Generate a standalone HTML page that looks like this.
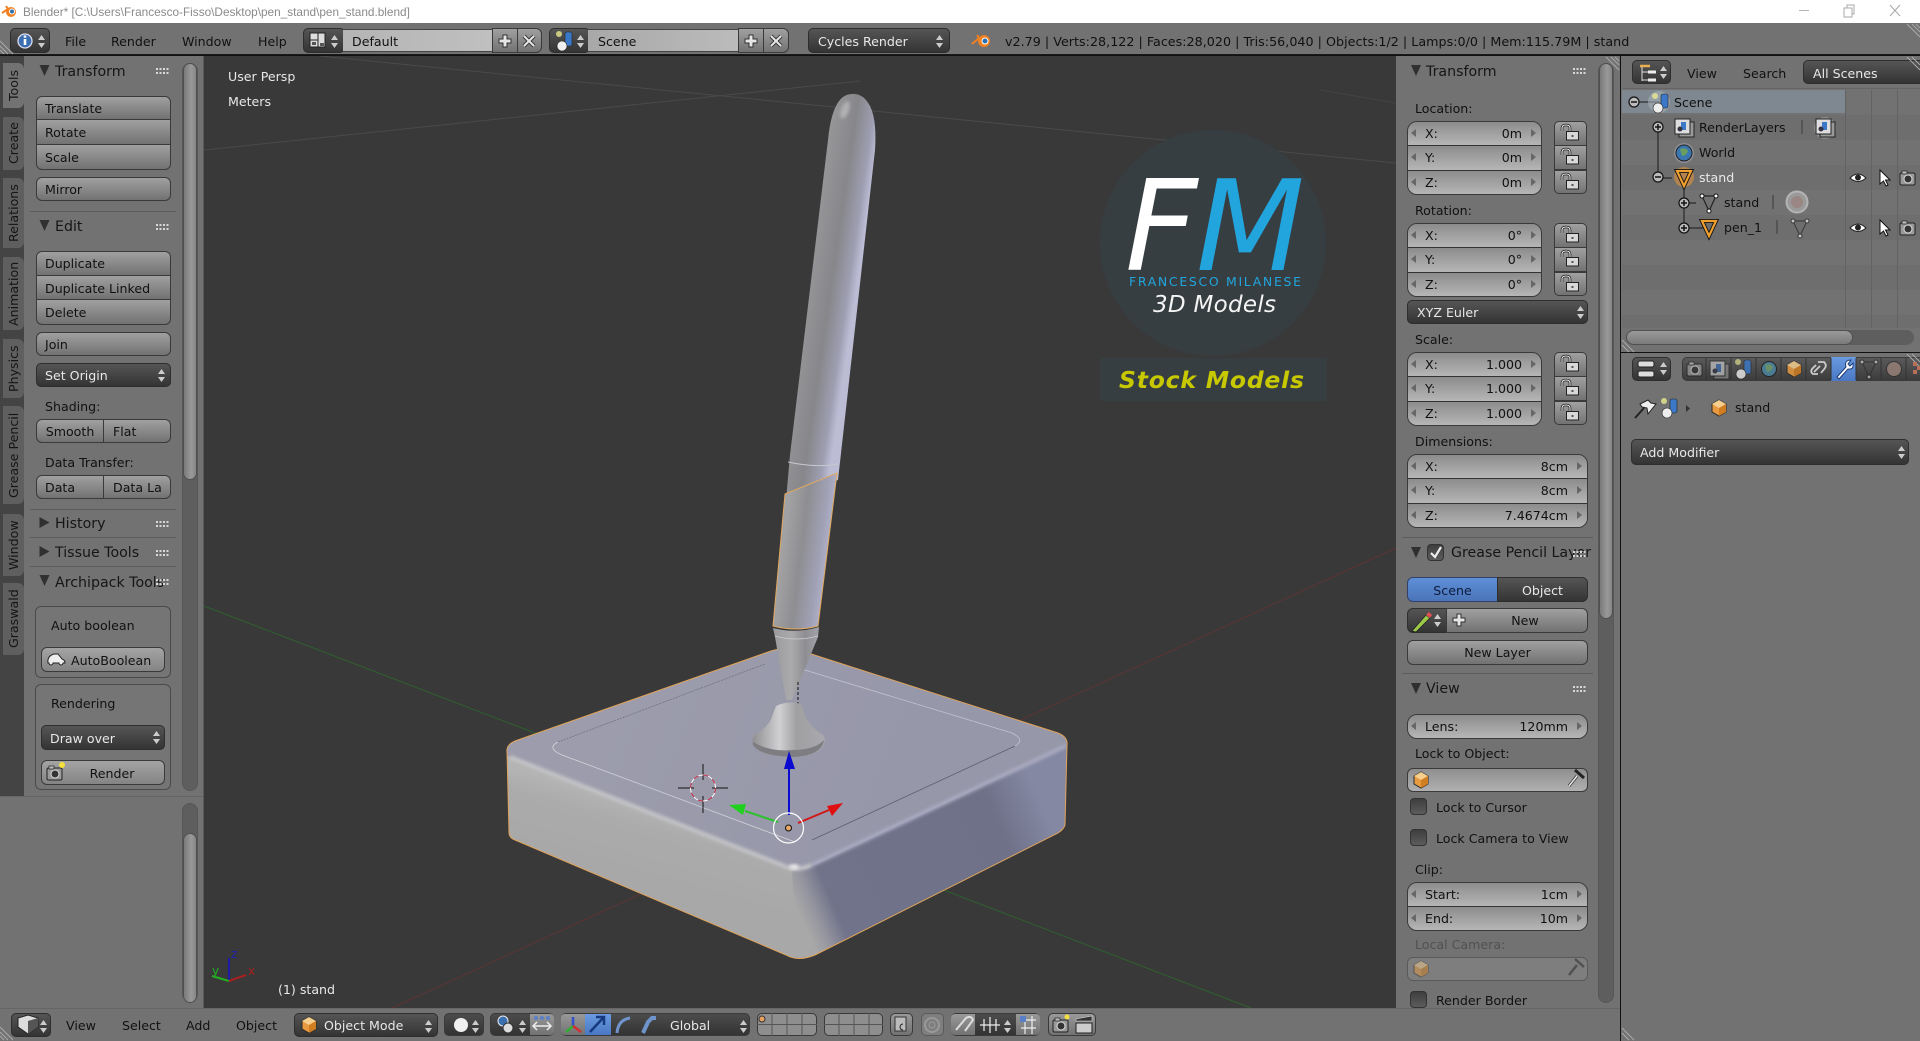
<!DOCTYPE html>
<html><head><meta charset="utf-8"><title>Blender</title>
<style>
html,body{margin:0;padding:0;width:1920px;height:1041px;overflow:hidden;background:#727272}
*{box-sizing:border-box}
body{font-family:"DejaVu Sans","Liberation Sans",sans-serif;font-size:12.6px;color:#111}
.a{position:absolute}
.t{position:absolute;white-space:nowrap;line-height:16px;height:16px}
.h{position:absolute;white-space:nowrap;line-height:18px;height:18px;font-size:14.2px;color:#161616;margin-top:1px}
.w{color:#e8e8e8}
.b{position:absolute;border:1px solid #3a3a3a;border-radius:6px;background:linear-gradient(#a0a0a0,#727272);line-height:24px;padding-left:8px;white-space:nowrap;color:#111}
.c{text-align:center;padding-left:0}
.d{position:absolute;border:1px solid #2e2e2e;border-radius:5px;background:linear-gradient(#555,#343434);line-height:24px;padding-left:8px;color:#e8e8e8;white-space:nowrap}
.g{position:absolute;border:1px solid #3a3a3a;border-radius:10px;overflow:hidden;display:flex;flex-direction:column}
.g>div{flex:1;position:relative;background:linear-gradient(#8c8c8c,#b6b6b6);border-top:1px solid #333;line-height:23px;padding-left:17px;white-space:nowrap;color:#111}
.g>div:first-child{border-top:0}
.g>div b{font-weight:normal;position:absolute;right:19px;top:0}
.g>div::before,.g>div::after{content:"";position:absolute;top:7px;border:4px solid transparent}
.g>div::before{left:3px;border-right:5px solid #666;border-left:0}
.g>div::after{right:5px;border-left:5px solid #666;border-right:0}
.lk{position:absolute;border:1px solid #3a3a3a;background:linear-gradient(#a0a0a0,#727272);height:25px;width:33px}
.tab{position:absolute;left:3px;width:21px;background:#5f5f5f;border-radius:6px 0 0 6px;writing-mode:vertical-rl;transform:rotate(180deg);text-align:center;line-height:21px;color:#151515;font-size:12.6px;white-space:nowrap}
.s{position:absolute;background:#5b5b5b;height:1px}
.sb{position:absolute;background:#5e5e5e;border-radius:8px;width:16px;border:1px solid #575757}
.th{position:absolute;left:0;width:14px;background:linear-gradient(90deg,#7a7a7a,#999 60%,#868686);border:1px solid #505050;border-radius:7px}
.row{position:absolute;left:1622px;width:298px;height:25px}
.cb{position:absolute;width:17px;height:17px;background:linear-gradient(#3e3e3e,#5c5c5c);border:1px solid #333;border-radius:4px}
.v{position:absolute;width:1px;top:90px;height:238px;background:#636363}
.grp{position:absolute;top:1013px;height:23px;border:1px solid #3a3a3a;border-radius:5px;background:linear-gradient(#4c4c4c,#333)}
svg{position:absolute;left:0;top:0}
</style></head><body>

<!-- viewport -->
<div class="a" style="left:204px;top:56px;width:1194px;height:952px;background:#393939"></div>
<svg width="1920" height="1041" viewBox="0 0 1920 1041">
<defs>
<filter id="bl" x="-20%" y="-20%" width="140%" height="140%"><feGaussianBlur stdDeviation="1.500"/></filter>
<clipPath id="bc"><path d="M507 752Q506 745 515 741L771 651Q790 645 805 652L1058 733Q1068 737 1067 745L1065 825Q1064 829 1058 833L815 955Q798 962 786 955L515 840Q509 838 509 832Z"/></clipPath>
<linearGradient id="pen" gradientUnits="userSpaceOnUse" x1="800" y1="290" x2="855" y2="298"><stop offset="0" stop-color="#9a9a9c"/><stop offset=".25" stop-color="#919194"/><stop offset=".55" stop-color="#87878b"/><stop offset=".85" stop-color="#9e9eb2"/><stop offset="1" stop-color="#bcbcd4"/></linearGradient>
<linearGradient id="pen2" gradientUnits="userSpaceOnUse" x1="782" y1="550" x2="830" y2="556"><stop offset="0" stop-color="#a2a2a4"/><stop offset=".4" stop-color="#8e8e92"/><stop offset=".8" stop-color="#a2a2b8"/><stop offset="1" stop-color="#b4b4cc"/></linearGradient>
<linearGradient id="cone" gradientUnits="userSpaceOnUse" x1="772" y1="660" x2="820" y2="660"><stop offset="0" stop-color="#9a9a9c"/><stop offset=".4" stop-color="#aaaaac"/><stop offset=".7" stop-color="#8e8e92"/><stop offset="1" stop-color="#a4a4ac"/></linearGradient>
<linearGradient id="foot" gradientUnits="userSpaceOnUse" x1="752" y1="730" x2="824" y2="730"><stop offset="0" stop-color="#8e8e90"/><stop offset=".38" stop-color="#d0d0d2"/><stop offset=".62" stop-color="#a0a0a2"/><stop offset="1" stop-color="#a8a8ae"/></linearGradient>
<linearGradient id="lf" gradientUnits="userSpaceOnUse" x1="660" y1="810" x2="640" y2="880"><stop offset="0" stop-color="#b4b4b4"/><stop offset=".3" stop-color="#ababab"/><stop offset="1" stop-color="#a8a8a8"/></linearGradient>
<linearGradient id="rf" gradientUnits="userSpaceOnUse" x1="796" y1="905" x2="1040" y2="800"><stop offset="0" stop-color="#a8a8a8"/><stop offset=".06" stop-color="#94949f"/><stop offset=".13" stop-color="#71738a"/><stop offset=".82" stop-color="#6f7189"/><stop offset="1" stop-color="#8488a2"/></linearGradient>
<linearGradient id="tf" gradientUnits="userSpaceOnUse" x1="600" y1="700" x2="900" y2="820"><stop offset="0" stop-color="#9c9cac"/><stop offset="1" stop-color="#9697a9"/></linearGradient>
</defs>
<!-- grid -->
<g fill="none" stroke-width="1">
<path d="M204 150L860 81" stroke="#4a4a4a"/>
<path d="M320 56L1396 163" stroke="#4a4a4a"/>
<path d="M1320 90L1396 103" stroke="#444"/>
<path d="M204 606L1251 1008" stroke="#2f5f2f"/>
<path d="M392 1008L1396 548" stroke="#5c3434"/>
</g>
<!-- base -->
<path d="M507 752Q506 745 515 741L771 651Q790 645 805 652L1058 733Q1068 737 1067 745L1065 825Q1064 829 1058 833L815 955Q798 962 786 955L515 840Q509 838 509 832Z" fill="url(#lf)"/>
<g clip-path="url(#bc)">
<path d="M505 754Q507 745 515 741L771 651Q790 645 805 652L1058 733Q1068 737 1069 746L810 868Q796 874 782 865L510 757Z" fill="url(#tf)"/>
<path d="M792 868Q803 872 812 866L1069 745L1067 830L815 958L796 960Z" fill="url(#rf)"/>
<path d="M510 757L782 865Q796 872 812 865" fill="none" stroke="#c4c4c8" stroke-width="4" filter="url(#bl)"/>
<path d="M812 865L1066 746" fill="none" stroke="#aaaac2" stroke-width="4" filter="url(#bl)"/>
<ellipse cx="794" cy="867" rx="5" ry="3" fill="#e4e4e6" filter="url(#bl)"/>
</g>
<path d="M558 742L765 664" fill="none" stroke="#6e6e7a" stroke-width=".8" stroke-dasharray="2 1" opacity=".9"/>
<path d="M785 664L1012 733Q1026 740 1015 746" fill="none" stroke="#d0d0d8" stroke-width=".8" opacity=".8"/>
<path d="M1015 746L812 840" fill="none" stroke="#5e5e6c" stroke-width=".8"/>
<path d="M795 842L562 755Q546 748 558 742" fill="none" stroke="#d4d4da" stroke-width=".8"/>
<path d="M507 752Q506 745 515 741L771 651Q790 645 805 652L1058 733Q1068 737 1067 745L1065 825Q1064 829 1058 833L815 955Q798 962 786 955L515 840Q509 838 509 832Z" fill="none" stroke="#dfa35c" stroke-width="1"/>
<!-- pen -->
<path d="M838 480L875 150Q877 120 870 106Q863 93 852 94Q842 94 836 106Q830 118 828 140L790 455L786 500Z" fill="url(#pen)"/>
<ellipse cx="845" cy="110" rx="4" ry="9" fill="#c8c8ca" opacity=".6" filter="url(#bl)" transform="rotate(20 845 110)"/>
<path d="M785 494L837 473L818 626Q796 632 773 626Z" fill="url(#pen2)" stroke="#e0a860" stroke-width="1"/>
<path d="M788 462Q815 468 838 464" fill="none" stroke="#c8c8d0" stroke-width="1"/>
<path d="M773 628Q796 634 819 627L818 637L792 700L786 700L775 637Z" fill="url(#cone)"/>
<path d="M775 636Q796 642 818 636" fill="none" stroke="#ccc" stroke-width=".8"/>
<path d="M798 682L798 704" stroke="#111" stroke-dasharray="3 2" fill="none"/>
<path d="M776 706Q789 700 801 704L806 718Q814 730 823 735Q826 738 824 744Q820 756 792 757Q760 756 753 745Q751 738 756 734Q770 726 773 714Z" fill="url(#foot)"/>
<path d="M753 742Q770 752 792 750Q815 750 824 740Q822 756 792 757Q760 756 753 745Z" fill="#7e7e82"/>
<!-- gizmo -->
<path d="M703 764V780M703 796V813M678 788H694M712 788H728" stroke="#111" fill="none"/>
<ellipse cx="703" cy="788" rx="12.5" ry="13" fill="none" stroke="#fff" stroke-width="1"/>
<ellipse cx="703" cy="788" rx="12.5" ry="13" fill="none" stroke="#c02040" stroke-width="1" stroke-dasharray="5 5"/>
<path d="M789 815V768" stroke="#0a0ad0" stroke-width="2"/><path d="M789 751L795 769H784Z" fill="#0a0ad0"/>
<path d="M778 822L745 811" stroke="#2cc02c" stroke-width="2"/><path d="M729 805L746 804L743 815Z" fill="#1fd01f"/>
<path d="M798 823L829 810" stroke="#d01818" stroke-width="2"/><path d="M843 803L832 816L827 806Z" fill="#e01010"/>
<circle cx="788.500" cy="828" r="15" fill="none" stroke="#fff" stroke-width="1.200"/>
<circle cx="788.500" cy="828" r="3" fill="#e8a868" stroke="#111"/>
<!-- mini axis -->
<path d="M229 981V958" stroke="#1c1ca8" stroke-width="2"/><path d="M229 981L212 976" stroke="#22b022" stroke-width="2"/><path d="M229 981L246 975" stroke="#a82020" stroke-width="2"/>
<text x="231" y="958" font-size="12" fill="#2222b0" font-family="DejaVu Sans">z</text>
<text x="212" y="975" font-size="12" fill="#22b022" font-family="DejaVu Sans">y</text>
<text x="248" y="975" font-size="12" fill="#a82020" font-family="DejaVu Sans">x</text>
<!-- logo -->
<circle cx="1213" cy="243" r="113" fill="#363e42"/>
<rect x="1100" y="358" width="227" height="43" fill="#363e42"/>
<text x="1125" y="270" font-size="126" font-style="italic" fill="#fff" font-family="DejaVu Sans">F</text>
<text x="1196" y="270" font-size="126" font-style="italic" fill="#22a5dd" font-family="DejaVu Sans">M</text>
<text x="1129" y="286" font-size="12.500" fill="#22a5dd" font-family="DejaVu Sans" textLength="172">FRANCESCO MILANESE</text>
<text x="1153" y="312" font-size="23" font-style="italic" fill="#f4f4f4" font-family="DejaVu Sans" textLength="123">3D Models</text>
<text x="1119" y="388" font-size="23.500" font-weight="bold" font-style="italic" fill="#c8c800" font-family="DejaVu Sans" textLength="185">Stock Models</text>
</svg>
<div class="t w" style="left:228px;top:69px">User Persp</div>
<div class="t w" style="left:228px;top:94px">Meters</div>
<div class="t w" style="left:278px;top:982px">(1) stand</div>

<!-- title bar -->
<div class="a" style="left:0;top:0;width:1920px;height:23px;background:#fff"></div>
<div class="t" style="left:23px;top:4px;font:11.8px/16px 'Liberation Sans',sans-serif;color:#8a8a8a">Blender* [C:\Users\Francesco-Fisso\Desktop\pen_stand\pen_stand.blend]</div>

<!-- top header -->
<div class="a" style="left:0;top:23px;width:1920px;height:32px;background:#727272;border-bottom:1px solid #1a1a1a"></div>
<div class="a" style="left:0;top:55px;width:1920px;height:1px;background:#111"></div>
<div class="d" style="left:10px;top:28px;width:40px;height:25px"></div>
<div class="t" style="left:65px;top:34px">File</div>
<div class="t" style="left:111px;top:34px">Render</div>
<div class="t" style="left:182px;top:34px">Window</div>
<div class="t" style="left:258px;top:34px">Help</div>
<div class="d" style="left:303px;top:28px;width:42px;height:25px"></div>
<div class="a" style="left:343px;top:29px;width:149px;height:23px;background:linear-gradient(90deg,#b4b4b4,#c0c0c0);border-top:1px solid #444;border-bottom:1px solid #444;line-height:24px;padding-left:9px">Default</div>
<div class="b c" style="left:492px;top:28px;width:26px;height:25px;border-radius:0"></div>
<div class="b c" style="left:517px;top:28px;width:25px;height:25px;border-radius:0 6px 6px 0"></div>
<div class="d" style="left:549px;top:28px;width:41px;height:25px"></div>
<div class="a" style="left:588px;top:29px;width:150px;height:23px;background:linear-gradient(90deg,#a8a8a8,#bbb);border-top:1px solid #444;border-bottom:1px solid #444;line-height:24px;padding-left:10px">Scene</div>
<div class="b c" style="left:738px;top:28px;width:26px;height:25px;border-radius:0"></div>
<div class="b c" style="left:763px;top:28px;width:26px;height:25px;border-radius:0 6px 6px 0"></div>
<div class="d" style="left:808px;top:28px;width:142px;height:25px;padding-left:9px;line-height:25px">Cycles Render</div>
<div class="t" style="left:1005px;top:34px;font-size:12.7px;letter-spacing:.02px">v2.79 | Verts:28,122 | Faces:28,020 | Tris:56,040 | Objects:1/2 | Lamps:0/0 | Mem:115.79M | stand</div>

<!-- left tabs + panel -->
<div class="a" style="left:0;top:56px;width:24px;height:740px;background:#444"></div>
<div class="a" style="left:24px;top:56px;width:180px;height:740px;background:#727272"></div>
<div class="a" style="left:0;top:796px;width:204px;height:212px;background:#727272;border-top:1px solid #666"></div>
<div class="a" style="left:203px;top:56px;width:1px;height:952px;background:#5a5a5a"></div>
<div class="tab" style="top:63px;height:45px;background:#727272">Tools</div>
<div class="tab" style="top:117px;height:53px">Create</div>
<div class="tab" style="top:178px;height:70px">Relations</div>
<div class="tab" style="top:257px;height:73px">Animation</div>
<div class="tab" style="top:339px;height:59px">Physics</div>
<div class="tab" style="top:406px;height:98px">Grease Pencil</div>
<div class="tab" style="top:514px;height:62px">Window</div>
<div class="tab" style="top:583px;height:72px">Graswald</div>

<div class="h" style="left:55px;top:62px">Transform</div>
<div class="b" style="left:36px;top:96px;width:135px;height:24px;border-radius:6px 6px 0 0;line-height:23px">Translate</div>
<div class="b" style="left:36px;top:119px;width:135px;height:26px;border-radius:0;line-height:26px">Rotate</div>
<div class="b" style="left:36px;top:144px;width:135px;height:26px;border-radius:0 0 6px 6px;line-height:26px">Scale</div>
<div class="b" style="left:36px;top:177px;width:135px;height:24px;line-height:23px">Mirror</div>
<div class="s" style="left:30px;top:211px;width:146px"></div>
<div class="h" style="left:55px;top:217px">Edit</div>
<div class="b" style="left:36px;top:251px;width:135px;height:25px;border-radius:6px 6px 0 0;line-height:23px">Duplicate</div>
<div class="b" style="left:36px;top:275px;width:135px;height:25px;border-radius:0;line-height:26px">Duplicate Linked</div>
<div class="b" style="left:36px;top:299px;width:135px;height:26px;border-radius:0 0 6px 6px;line-height:26px">Delete</div>
<div class="b" style="left:36px;top:332px;width:135px;height:24px;line-height:23px">Join</div>
<div class="d" style="left:36px;top:363px;width:135px;height:24px;line-height:23px">Set Origin</div>
<div class="t" style="left:45px;top:399px">Shading:</div>
<div class="b c" style="left:36px;top:419px;width:68px;height:24px;border-radius:6px 0 0 6px;line-height:23px">Smooth</div>
<div class="b" style="left:103px;top:419px;width:68px;height:24px;border-radius:0 6px 6px 0;padding-left:9px;line-height:23px">Flat</div>
<div class="t" style="left:45px;top:455px">Data Transfer:</div>
<div class="b" style="left:36px;top:475px;width:68px;height:24px;border-radius:6px 0 0 6px;line-height:23px">Data</div>
<div class="b" style="left:103px;top:475px;width:68px;height:24px;border-radius:0 6px 6px 0;padding-left:9px;line-height:23px">Data La</div>
<div class="s" style="left:30px;top:509px;width:146px"></div>
<div class="h" style="left:55px;top:514px">History</div>
<div class="s" style="left:30px;top:537px;width:146px"></div>
<div class="h" style="left:55px;top:543px">Tissue Tools</div>
<div class="s" style="left:30px;top:566px;width:146px"></div>
<div class="h" style="left:55px;top:573px">Archipack Tools</div>
<div class="a" style="left:35px;top:606px;width:136px;height:72px;border:1px solid #4a4a4a;border-radius:6px;background:#757575"></div>
<div class="t" style="left:51px;top:618px">Auto boolean</div>
<div class="b" style="left:41px;top:647px;width:124px;height:25px;padding-left:29px;line-height:26px;background:linear-gradient(#a4a4a4,#848484)">AutoBoolean</div>
<div class="a" style="left:35px;top:684px;width:136px;height:106px;border:1px solid #4a4a4a;border-radius:6px;background:#757575"></div>
<div class="t" style="left:51px;top:696px">Rendering</div>
<div class="d" style="left:41px;top:725px;width:124px;height:25px;line-height:26px">Draw over</div>
<div class="b c" style="left:41px;top:760px;width:124px;height:25px;padding-left:18px;line-height:26px;background:linear-gradient(#a4a4a4,#848484)">Render</div>
<div class="sb" style="left:182px;top:63px;height:728px"><div class="th" style="top:-1px;height:417px"></div></div>
<div class="sb" style="left:182px;top:803px;height:199px"><div class="th" style="top:29px;height:170px"></div></div>

<!-- right N panel -->
<div class="a" style="left:1396px;top:56px;width:224px;height:952px;background:#727272"></div>
<div class="a" style="left:1398px;top:1008px;width:222px;height:33px;background:#6a6a6a"></div>
<div class="a" style="left:1620px;top:56px;width:1px;height:985px;background:#111"></div>
<div class="sb" style="left:1598px;top:63px;height:940px"><div class="th" style="top:-1px;height:556px"></div></div>
<div class="h" style="left:1426px;top:62px">Transform</div>
<div class="t" style="left:1415px;top:101px">Location:</div>
<div class="g" style="left:1407px;top:121px;width:135px;height:74px"><div>X:<b>0m</b></div><div>Y:<b>0m</b></div><div>Z:<b>0m</b></div></div>
<div class="t" style="left:1415px;top:203px">Rotation:</div>
<div class="g" style="left:1407px;top:223px;width:135px;height:74px"><div>X:<b>0°</b></div><div>Y:<b>0°</b></div><div>Z:<b>0°</b></div></div>
<div class="d" style="left:1407px;top:300px;width:181px;height:24px;line-height:23px;padding-left:9px">XYZ Euler</div>
<div class="t" style="left:1415px;top:332px">Scale:</div>
<div class="g" style="left:1407px;top:352px;width:135px;height:74px"><div>X:<b>1.000</b></div><div>Y:<b>1.000</b></div><div>Z:<b>1.000</b></div></div>
<div class="t" style="left:1415px;top:434px">Dimensions:</div>
<div class="g" style="left:1407px;top:454px;width:181px;height:74px"><div>X:<b>8cm</b></div><div>Y:<b>8cm</b></div><div>Z:<b>7.4674cm</b></div></div>
<div class="lk" style="left:1554px;top:121px;border-radius:5px 5px 0 0"></div>
<div class="lk" style="left:1554px;top:145px"></div>
<div class="lk" style="left:1554px;top:170px;height:24px;border-radius:0 0 5px 5px"></div>
<div class="lk" style="left:1554px;top:223px;border-radius:5px 5px 0 0"></div>
<div class="lk" style="left:1554px;top:247px"></div>
<div class="lk" style="left:1554px;top:272px;height:24px;border-radius:0 0 5px 5px"></div>
<div class="lk" style="left:1554px;top:352px;border-radius:5px 5px 0 0"></div>
<div class="lk" style="left:1554px;top:376px"></div>
<div class="lk" style="left:1554px;top:401px;height:24px;border-radius:0 0 5px 5px"></div>
<div class="s" style="left:1402px;top:537px;width:191px"></div>
<div class="cb" style="left:1427px;top:544px"></div>
<div class="h" style="left:1451px;top:543px">Grease Pencil Layer</div>
<div class="a" style="left:1407px;top:577px;width:91px;height:25px;border:1px solid #33406a;border-radius:6px 0 0 6px;background:linear-gradient(#5f8fd8,#4a74b8);text-align:center;line-height:25px;color:#0c1c3c">Scene</div>
<div class="d" style="left:1497px;top:577px;width:91px;height:25px;border-radius:0 6px 6px 0;text-align:center;padding:0;line-height:25px">Object</div>
<div class="d" style="left:1407px;top:608px;width:40px;height:25px;border-radius:6px 0 0 6px"></div>
<div class="b c" style="left:1446px;top:608px;width:142px;height:25px;border-radius:0 6px 6px 0;padding-left:16px">New</div>
<div class="b c" style="left:1407px;top:640px;width:181px;height:25px">New Layer</div>
<div class="s" style="left:1402px;top:673px;width:191px"></div>
<div class="h" style="left:1426px;top:679px">View</div>
<div class="g" style="left:1407px;top:714px;width:181px;height:25px"><div>Lens:<b>120mm</b></div></div>
<div class="t" style="left:1415px;top:746px">Lock to Object:</div>
<div class="b" style="left:1407px;top:768px;width:181px;height:24px;background:linear-gradient(#8e8e8e,#b0b0b0)"></div>
<div class="cb" style="left:1410px;top:798px"></div>
<div class="t" style="left:1436px;top:800px">Lock to Cursor</div>
<div class="cb" style="left:1410px;top:829px"></div>
<div class="t" style="left:1436px;top:831px">Lock Camera to View</div>
<div class="t" style="left:1415px;top:862px">Clip:</div>
<div class="g" style="left:1407px;top:882px;width:181px;height:49px"><div>Start:<b>1cm</b></div><div>End:<b>10m</b></div></div>
<div class="t" style="left:1415px;top:937px;color:#515151">Local Camera:</div>
<div class="b" style="left:1407px;top:957px;width:181px;height:24px;background:#7e7e7e;border-color:#5a5a5a"></div>
<div class="cb" style="left:1410px;top:991px"></div>
<div class="t" style="left:1436px;top:993px">Render Border</div>

<!-- outliner -->
<div class="a" style="left:1621px;top:56px;width:299px;height:296px;background:#727272"></div>
<div class="row" style="top:115px;background:#6e6e6e"></div>
<div class="row" style="top:165px;background:#6e6e6e"></div>
<div class="row" style="top:215px;background:#6e6e6e"></div>
<div class="row" style="top:265px;background:#6e6e6e"></div>
<div class="row" style="top:315px;height:13px;background:#6e6e6e"></div>
<div class="a" style="left:1622px;top:90px;width:223px;height:23px;background:#7f8890"></div>
<div class="v" style="left:1845px"></div><div class="v" style="left:1871px"></div><div class="v" style="left:1897px"></div>
<div class="d" style="left:1632px;top:60px;width:39px;height:24px"></div>
<div class="t" style="left:1687px;top:66px">View</div>
<div class="t" style="left:1743px;top:66px">Search</div>
<div class="d" style="left:1803px;top:60px;width:122px;height:24px;line-height:25px;padding-left:9px">All Scenes</div>
<div class="a" style="left:1622px;top:88px;width:298px;height:1px;background:#666"></div>
<div class="t" style="left:1674px;top:95px">Scene</div>
<div class="t" style="left:1699px;top:120px">RenderLayers</div>
<div class="t" style="left:1699px;top:145px">World</div>
<div class="t w" style="left:1699px;top:170px">stand</div>
<div class="t" style="left:1724px;top:195px">stand</div>
<div class="t" style="left:1724px;top:220px">pen_1</div>
<div class="a" style="left:1626px;top:330px;width:288px;height:15px;background:#5e5e5e;border-radius:8px"><div style="width:227px;height:15px;border-radius:8px;background:linear-gradient(#9a9a9a,#7a7a7a);border:1px solid #505050"></div></div>

<!-- properties -->
<div class="a" style="left:1621px;top:352px;width:299px;height:1px;background:#111"></div>
<div class="a" style="left:1621px;top:353px;width:299px;height:688px;background:#727272"></div>
<div class="d" style="left:1632px;top:357px;width:39px;height:24px"></div>
<div class="grp" style="left:1682px;top:357px;width:245px;height:24px;background:linear-gradient(#5a5a5a,#3c3c3c)"></div>
<div class="a" style="left:1831px;top:357px;width:25px;height:24px;background:linear-gradient(#6a9ae0,#4a78c4)"></div>
<div class="t" style="left:1735px;top:400px">stand</div>
<div class="d" style="left:1631px;top:439px;width:278px;height:26px;line-height:25px;padding-left:8px">Add Modifier</div>

<!-- bottom header -->
<div class="a" style="left:0;top:1008px;width:1620px;height:33px;background:#727272;border-top:1px solid #666"></div>
<div class="d" style="left:11px;top:1013px;width:40px;height:24px"></div>
<div class="t" style="left:66px;top:1018px">View</div>
<div class="t" style="left:122px;top:1018px">Select</div>
<div class="t" style="left:186px;top:1018px">Add</div>
<div class="t" style="left:236px;top:1018px">Object</div>
<div class="d" style="left:294px;top:1013px;width:144px;height:24px;padding-left:29px;line-height:23px">Object Mode</div>
<div class="grp" style="left:444px;width:40px"></div>
<div class="grp" style="left:490px;width:64px"></div>
<div class="a" style="left:530px;top:1014px;width:24px;height:21px;background:linear-gradient(#999,#727272);border-radius:0 4px 4px 0"></div>
<div class="grp" style="left:561px;width:189px"></div>
<div class="a" style="left:561px;top:1014px;width:24px;height:21px;background:linear-gradient(#999,#727272);border-radius:4px 0 0 4px"></div>
<div class="a" style="left:585px;top:1014px;width:26px;height:21px;background:linear-gradient(#6a9ae0,#4a78c4)"></div>
<div class="t w" style="left:670px;top:1018px">Global</div>
<div class="grp" style="left:757px;width:60px;background:#8e8e8e"></div>
<div class="grp" style="left:824px;width:59px;background:#8e8e8e"></div>
<div class="grp" style="left:890px;width:23px;background:linear-gradient(#999,#727272)"></div>
<div class="grp" style="left:921px;width:23px;background:#7e7e7e;border-color:#5a5a5a"></div>
<div class="grp" style="left:951px;width:89px"></div>
<div class="a" style="left:951px;top:1014px;width:24px;height:21px;background:linear-gradient(#999,#727272);border-radius:4px 0 0 4px"></div>
<div class="a" style="left:1016px;top:1014px;width:24px;height:21px;background:linear-gradient(#999,#727272);border-radius:0 4px 4px 0"></div>
<div class="grp" style="left:1048px;width:48px;background:linear-gradient(#999,#727272)"></div>

<!-- icons overlay -->
<svg width="1920" height="1041" viewBox="0 0 1920 1041" style="pointer-events:none">
<defs>
<g id="ud"><path d="M0 4L3.500 -1L7 4Z" fill="#ccc"/><path d="M0 7L3.500 12L7 7Z" fill="#ccc"/></g>
<g id="grip" fill="#d8d8d8"><rect x="0" y="0" width="2" height="2"/><rect x="3.500" y="0" width="2" height="2"/><rect x="7" y="0" width="2" height="2"/><rect x="10.500" y="0" width="2" height="2"/><rect x="0" y="4" width="2" height="2"/><rect x="3.500" y="4" width="2" height="2"/><rect x="7" y="4" width="2" height="2"/><rect x="10.500" y="4" width="2" height="2"/></g>
<g id="lock"><path d="M-1 3V0Q-1 -3 3 -3Q7 -3 7 0V4" fill="none" stroke="#1a1a1a" stroke-width="2.600"/><path d="M-1 3V0Q-1 -3 3 -3Q7 -3 7 0V4" fill="none" stroke="#eaeaea" stroke-width="1.100"/><rect x="3.500" y="3.500" width="12" height="8.500" fill="#d8d8d8" stroke="#222"/><rect x="8.500" y="7" width="2" height="2" fill="#555"/></g>
<g id="cube"><path d="M0 3L7 -1L14 3V11L7 15L0 11Z" fill="#e89a40" stroke="#2a2a2a" stroke-width="1"/><path d="M0 3L7 7L14 3L7 -1Z" fill="#f6cf8e"/><path d="M7 7V15L14 11V3Z" fill="#d07e20"/></g>
<g id="tri" ><path d="M0 0L10 0L5 11Z" fill="#303030"/></g>
<g id="tr"><path d="M0 0L10 5.500L0 11Z" fill="#303030"/></g>
<g id="eye"><path d="M0 5Q8 -3 16 5Q8 12 0 5Z" fill="#fff" stroke="#222"/><circle cx="8" cy="4.500" r="3" fill="#222"/></g>
<g id="arr"><path d="M0 0L0 14L3.500 11L6 16L8 15L5.500 10L10 10Z" fill="#fff" stroke="#111"/></g>
<g id="cam"><rect x="0" y="2" width="15" height="12" rx="1.500" fill="#999" stroke="#222"/><rect x="2" y="0" width="5" height="3" fill="#bbb" stroke="#222" stroke-width=".7"/><circle cx="8" cy="8" r="4" fill="#333" stroke="#ddd"/></g>
<g id="plus"><path d="M-2 -6H2V-2H6V2H2V6H-2V2H-6V-2H-2Z" fill="#e6e6e6" stroke="#333"/></g>
<g id="xx"><path d="M-5 -5L5 5M5 -5L-5 5" stroke="#333" stroke-width="4"/><path d="M-5 -5L5 5M5 -5L-5 5" stroke="#e6e6e6" stroke-width="2"/></g>
<g id="ob"><path d="M0 0H14L7 15Z" fill="none" stroke="#111" stroke-width="4"/><path d="M0 0H14L7 15Z" fill="none" stroke="#f0a030" stroke-width="2.200"/></g>
<g id="me"><path d="M0 0H14L7 15Z" fill="none" stroke="#222" stroke-width="1.200"/><circle cx="0" cy="0" r="2" fill="#fff" stroke="#111"/><circle cx="14" cy="0" r="2" fill="#fff" stroke="#111"/><circle cx="7" cy="15" r="2" fill="#fff" stroke="#111"/></g>
<g id="sc"><circle cx="0" cy="0" r="3" fill="#e8e890" opacity=".8"/><rect x="6" y="-2" width="7" height="14" rx="2" fill="#3b78c8" stroke="#222" stroke-width=".6"/><circle cx="3" cy="12" r="5" fill="#eee" stroke="#222" stroke-width=".6"/></g>
<g id="rl"><rect x="4" y="3" width="15" height="15" fill="#999" stroke="#222"/><rect x="0" y="0" width="15" height="15" fill="#ddd" stroke="#222"/><rect x="6" y="3" width="5" height="8" fill="#3b78c8"/><circle cx="5" cy="10" r="2.500" fill="#334"/></g>
<g id="minus"><circle cx="0" cy="0" r="5" fill="#bbb" stroke="#111" stroke-width="1.200"/><path d="M-3 0H3" stroke="#111" stroke-width="1.500"/></g>
<g id="pl"><circle cx="0" cy="0" r="5" fill="#bbb" stroke="#111" stroke-width="1.200"/><path d="M-3 0H3M0 -3V3" stroke="#111" stroke-width="1.500"/></g>
</defs>
<!-- title icon -->
<circle cx="11" cy="12" r="5" fill="#f08020"/><circle cx="12" cy="11.500" r="2.500" fill="#2c6fb0" stroke="#fff"/><path d="M2 13L8 9L6 6" fill="none" stroke="#f08020" stroke-width="2"/>
<!-- window controls -->
<path d="M1799 10.500H1809" stroke="#b4b4b4"/><path d="M1844 8H1852V17H1844ZM1847 8V5H1854V14H1852" fill="none" stroke="#a8a8a8"/><path d="M1890 5L1900 16M1900 5L1890 16" stroke="#a8a8a8" fill="none"/>
<!-- corner hatches -->
<g stroke="#aaa" stroke-width="1" fill="none">
<path d="M0 41L13 54M0 46L8 54M0 50L4 54"/><path d="M0 1027L13 1040M0 1032L8 1040M0 1036L4 1040"/>
<path d="M1907 24L1920 37M1912 24L1920 32M1916 24L1920 28"/>
<path d="M1606 57L1619 70M1611 57L1619 65M1615 57L1619 61"/><path d="M1907 57L1920 70M1912 57L1920 65"/>
<path d="M1622 340L1634 352M1622 345L1629 352"/><path d="M1907 354L1920 367M1912 354L1920 362"/><path d="M1622 1028L1634 1040M1622 1033L1629 1040"/>
</g>
<!-- top header icons -->
<circle cx="25" cy="41" r="7" fill="#3b6eb0" stroke="#dde" stroke-width="1.300"/><rect x="23.700" y="39" width="2.600" height="6" fill="#fff"/><rect x="23.700" y="35.500" width="2.600" height="2.200" fill="#fff"/>
<use href="#ud" x="38" y="36"/>
<path d="M310 33H325V47H310ZM318 33V47M310 40H318" fill="#ddd" stroke="#222"/><rect x="312" y="42" width="4" height="3" fill="#555"/><rect x="320" y="43" width="4" height="3" fill="#555"/>
<use href="#ud" x="331" y="36"/>
<use href="#plus" x="505" y="41"/><use href="#xx" x="529" y="41"/>
<use href="#sc" x="559" y="34"/><use href="#ud" x="577" y="36"/>
<use href="#plus" x="751" y="41"/><use href="#xx" x="776" y="41"/>
<use href="#ud" x="936" y="36"/>
<circle cx="984" cy="41" r="6" fill="#f08020"/><circle cx="985" cy="41" r="3" fill="#2c6fb0" stroke="#fff"/><path d="M972 44L979 38L977 35" fill="none" stroke="#f08020" stroke-width="2"/>
<!-- left panel -->
<use href="#tri" x="39.500" y="65"/><use href="#grip" x="156" y="68"/>
<use href="#tri" x="39.500" y="220"/><use href="#grip" x="156" y="224"/>
<use href="#tr" x="39.500" y="517"/><use href="#grip" x="156" y="521"/>
<use href="#tr" x="39.500" y="546"/><use href="#grip" x="156" y="550"/>
<use href="#tri" x="39.500" y="575"/><use href="#grip" x="156" y="579"/>
<use href="#ud" x="158" y="370"/><use href="#ud" x="153" y="732"/>
<path d="M48 663Q47 656 54 654H58L62 659Q65 660 65 663H63A2 2 0 0 1 59 663H53A2 2 0 0 1 49 663Z" fill="#eee" stroke="#222"/>
<use href="#cam" x="47" y="766"/><circle cx="62" cy="765" r="3" fill="#f4e040"/>
<!-- right panel -->
<use href="#tri" x="1411" y="65"/><use href="#grip" x="1573" y="68"/>
<use href="#tri" x="1411" y="547"/><use href="#grip" x="1573" y="551"/>
<use href="#tri" x="1411" y="683"/><use href="#grip" x="1573" y="686"/>
<path d="M1431 553L1435 557L1441 547" fill="none" stroke="#eee" stroke-width="2.200"/>
<use href="#lock" x="1563" y="128"/><use href="#lock" x="1563" y="152"/><use href="#lock" x="1563" y="177"/>
<use href="#lock" x="1563" y="230"/><use href="#lock" x="1563" y="254"/><use href="#lock" x="1563" y="279"/>
<use href="#lock" x="1563" y="359"/><use href="#lock" x="1563" y="383"/><use href="#lock" x="1563" y="408"/>
<use href="#ud" x="1577" y="307"/>
<path d="M1412 631L1426 615L1430 618L1416 632Z" fill="#9cc84a" stroke="#222" stroke-width=".8"/><path d="M1426 615L1429 612L1432 615L1430 618Z" fill="#e05050"/>
<use href="#ud" x="1434" y="615"/><use href="#plus" x="1459" y="620"/>
<use href="#cube" x="1414" y="773"/>
<path d="M1569 786L1577 776M1575 770L1584 778" stroke="#222" stroke-width="3" fill="none"/><path d="M1569 786L1577 776" stroke="#eee" stroke-width="1.500"/>
<g opacity=".5"><use href="#cube" x="1414" y="962"/><path d="M1569 975L1577 965M1575 959L1584 967" stroke="#222" stroke-width="2.500" fill="none"/></g>
<!-- outliner header -->
<path d="M1640 66H1650" stroke="#e8b050" stroke-width="2.500" fill="none"/><path d="M1642 67V81M1642 72H1648M1642 80H1648" stroke="#ddd" stroke-width="1" fill="none"/><rect x="1648" y="70.500" width="8" height="3" fill="#eee"/><rect x="1648" y="78.500" width="8" height="3" fill="#eee"/><use href="#ud" x="1660" y="67"/>
<rect x="1638" y="361" width="16" height="6" rx="2" fill="#ddd" stroke="#222"/><rect x="1638" y="371" width="16" height="6" rx="2" fill="#ddd" stroke="#222"/><use href="#ud" x="1660" y="363"/>
<!-- outliner tree -->
<path d="M1634 102H1660M1658 128V178M1658 178H1672M1684 188V228M1684 228H1705M1684 203H1696" stroke="#1a1a1a" fill="none"/>
<use href="#minus" x="1634" y="102"/><circle cx="1659" cy="102" r="11" fill="#aab4bc" opacity=".55"/><use href="#sc" x="1655" y="96"/>
<use href="#pl" x="1658" y="127"/><use href="#rl" x="1675" y="119"/><rect x="1801" y="120" width="2" height="14" fill="#555"/><circle cx="1825" cy="128" r="11" fill="#aab" opacity=".5"/><use href="#rl" x="1816" y="119"/>
<circle cx="1684" cy="153" r="10" fill="#aab" opacity=".5"/><circle cx="1684" cy="153" r="8" fill="#3a77b0" stroke="#222"/><path d="M1680 149Q1686 147 1688 151Q1686 156 1682 156Z" fill="#69a060"/>
<use href="#minus" x="1658" y="177"/><circle cx="1684" cy="177" r="10" fill="#c48848" opacity=".8"/><use href="#ob" x="1677" y="171"/>
<use href="#eye" x="1850" y="173"/><use href="#arr" x="1880" y="170"/><use href="#cam" x="1900" y="171"/>
<use href="#pl" x="1684" y="203"/><use href="#me" x="1702" y="196"/><rect x="1772" y="195" width="2" height="14" fill="#555"/><circle cx="1797" cy="202" r="10.500" fill="#9a9a9a" stroke="#b4b4b4" stroke-width="2"/><circle cx="1797" cy="202" r="6" fill="#9a8682"/>
<use href="#pl" x="1684" y="228"/><use href="#ob" x="1702" y="221"/><rect x="1776" y="220" width="2" height="14" fill="#555"/><use href="#me" x="1793" y="221" opacity=".6"/>
<use href="#eye" x="1850" y="223"/><use href="#arr" x="1880" y="220"/><use href="#cam" x="1900" y="221"/>
<!-- properties tabs -->
<g stroke="#333"><path d="M1706 358V380M1731 358V380M1756 358V380M1781 358V380M1806 358V380M1831 358V380M1856 358V380M1881 358V380M1906 358V380"/></g>
<use href="#cam" x="1687" y="362" opacity=".75"/>
<use href="#rl" x="1710" y="361" opacity=".6"/>
<use href="#sc" x="1738" y="362" opacity=".8"/>
<circle cx="1769" cy="369" r="7.500" fill="#4a7c94" stroke="#222"/><path d="M1765 365Q1771 363 1773 367Q1771 372 1767 372Z" fill="#69906a"/>
<use href="#cube" x="1787" y="362" opacity=".85"/>
<path d="M1814 372L1820 366M1818 374L1813 374Q1810 372 1812 369L1816 365M1818 362L1824 362Q1827 365 1825 368L1821 373" fill="none" stroke="#ccc" stroke-width="1.800"/>
<path d="M1837 377L1846 367Q1844 360 1851 360L1848 364L1850 366L1853 363Q1854 370 1848 369L1839 379Z" fill="#fff" stroke="#1c3c78"/>
<use href="#me" x="1862" y="362" opacity=".5"/>
<circle cx="1894" cy="369" r="7.500" fill="#8a7870" stroke="#333"/>
<g fill="#b87058"><rect x="1913" y="362" width="4" height="4"/><rect x="1917" y="366" width="3" height="4"/><rect x="1913" y="370" width="4" height="4"/></g>
<!-- breadcrumb -->
<path d="M1635 418L1644 408" stroke="#222" stroke-width="2" fill="none"/><path d="M1640 404L1648 400L1651 403L1656 404L1648 414L1647 408L1642 407Z" fill="#eee" stroke="#222"/>
<use href="#sc" x="1664" y="401"/>
<path d="M1686 405L1690 408.500L1686 412Z" fill="#333"/>
<use href="#cube" x="1712" y="401"/>
<use href="#ud" x="1898" y="447"/>
<!-- bottom icons -->
<path d="M18 1018L28 1015L38 1018V1027L28 1034L18 1027Z" fill="#ddd" stroke="#222"/><path d="M28 1021V1034L38 1027V1018Z" fill="#555"/><use href="#ud" x="40" y="1021"/>
<use href="#cube" x="302" y="1018"/><use href="#ud" x="425" y="1021"/>
<circle cx="461" cy="1025" r="7" fill="#f0f0f0"/><use href="#ud" x="472" y="1021"/>
<circle cx="503" cy="1021" r="5" fill="#3a6fb0" stroke="#eee"/><circle cx="508" cy="1028" r="5" fill="#ddd" stroke="#333"/><use href="#ud" x="519" y="1021"/>
<path d="M534 1026H550M537 1022L533 1026L537 1030M547 1022L551 1026L547 1030" fill="none" stroke="#eee" stroke-width="1.500"/><g fill="#5880c8"><circle cx="536" cy="1018" r="2"/><circle cx="542" cy="1018" r="2"/><circle cx="548" cy="1018" r="2"/></g>
<path d="M573 1017V1026" stroke="#3050d0" stroke-width="2.500"/><path d="M573 1026L566 1032" stroke="#30b030" stroke-width="2.500"/><path d="M573 1026L581 1032" stroke="#d03030" stroke-width="2.500"/>
<path d="M590 1032L603 1018M596 1017H604V1025" fill="none" stroke="#163a80" stroke-width="2.500"/>
<path d="M617 1033Q618 1020 630 1018" fill="none" stroke="#6f94cc" stroke-width="3"/>
<path d="M643 1033L648 1022L652 1018H656" fill="none" stroke="#6f94cc" stroke-width="4"/>
<use href="#ud" x="740" y="1021"/>
<g stroke="#555" fill="none"><path d="M757 1024.500H817M772 1013V1036M787 1013V1036M802 1013V1036M824 1024.500H883M839 1013V1036M854 1013V1036M869 1013V1036"/></g>
<circle cx="762" cy="1019" r="3" fill="#e8a060" stroke="#333"/>
<rect x="895" y="1017" width="11" height="14" fill="#bbb" stroke="#333"/><path d="M903 1030a3 3 0 1 1 0 -6" fill="none" stroke="#222"/>
<circle cx="932" cy="1025" r="7" fill="none" stroke="#999" stroke-width="2"/><circle cx="932" cy="1025" r="3" fill="none" stroke="#999"/>
<path d="M956 1030L966 1018Q971 1015 973 1020L965 1031" fill="none" stroke="#ddd" stroke-width="2"/>
<path d="M980 1025H1000M984 1019V1031M990 1017V1033M996 1019V1031" stroke="#eee" stroke-width="1.200"/><use href="#ud" x="1004" y="1021"/>
<path d="M1021 1020H1036M1021 1028H1036M1025 1016V1034M1032 1016V1034" stroke="#eee" stroke-width="1.200"/><rect x="1020" y="1016" width="6" height="6" fill="#5880c8"/>
<use href="#cam" x="1053" y="1018"/><circle cx="1067" cy="1017" r="2.500" fill="#f4e040"/>
<rect x="1076" y="1023" width="16" height="10" fill="#ccc" stroke="#222"/><path d="M1076 1019L1092 1016V1021H1076Z" fill="#333" stroke="#ddd" stroke-width=".6"/>
</svg>
</body></html>
